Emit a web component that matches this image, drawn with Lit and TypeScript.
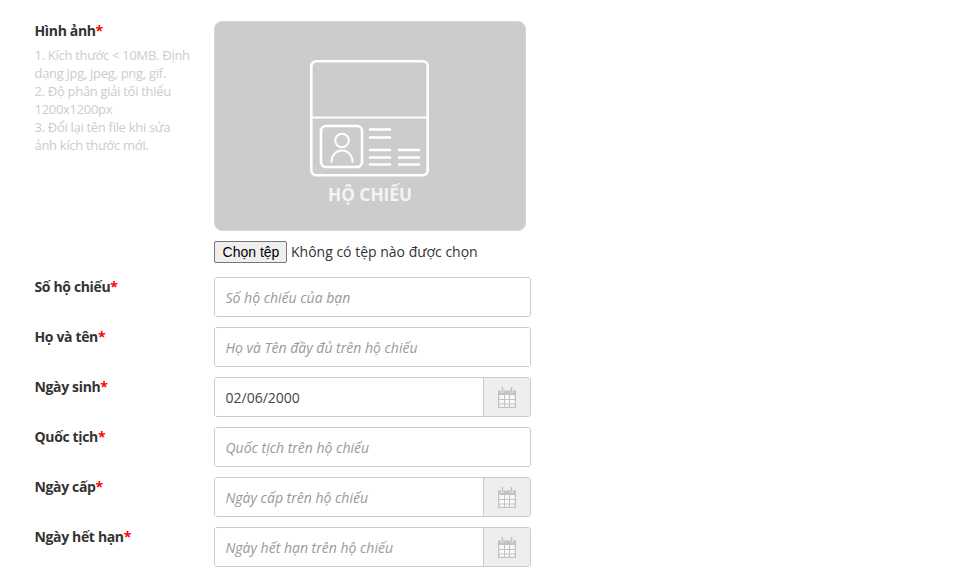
import { LitElement, html, css, svg } from "lit";
import { customElement } from "lit/decorators.js";

const calendar = html`<svg width="20" height="23" viewBox="0 0 20 23">
  <path fill="#c2c2c2" d="M1 4.500h3v2.500h2.500V4.500h7V7H16V4.500h3V22H1z"/>
  <rect x="4.700" y="1" width="1.500" height="5.500" fill="#c2c2c2"/>
  <rect x="13.800" y="1" width="1.500" height="5.500" fill="#c2c2c2"/>
  <g fill="#f9f9f9">
    <rect x="2.300" y="9" width="4.700" height="4"/><rect x="8" y="9" width="4" height="4"/><rect x="13" y="9" width="4.700" height="4"/>
    <rect x="2.300" y="14" width="4.700" height="3.500"/><rect x="8" y="14" width="4" height="3.500"/><rect x="13" y="14" width="4.700" height="3.500"/>
    <rect x="2.300" y="18.500" width="4.700" height="2.300"/><rect x="8" y="18.500" width="4" height="2.300"/><rect x="13" y="18.500" width="4.700" height="2.300"/>
  </g>
</svg>`;

const passportIcon = svg`
  <g fill="none" stroke="#fff" stroke-linecap="round">
    <rect x="1.300" y="1.300" width="116.400" height="114" rx="5" stroke-width="2.600"/>
    <path d="M1.500 57.500h116" stroke-width="1.800"/>
    <rect x="11" y="66" width="41" height="41" rx="5" stroke-width="2.600"/>
    <circle cx="32" cy="80.500" r="6.800" stroke-width="2"/>
    <path d="M21.500 102c0-7 4.600-11.500 10.500-11.500S42.500 95 42.500 102" stroke-width="2"/>
    <path d="M60 69.500h20M60 77.500h20M60 90h20M60 97.500h20M60 104.500h20M89 90h20M89 97.500h20M89 104.500h20" stroke-width="2.600"/>
  </g>`;

@customElement("app-root")
export class AppRoot extends LitElement {
  static styles = css`
    :host {
      display: block;
      box-sizing: border-box;
      height: 587px;
      padding: 21px 0 0 34.500px;
      background: #fff;
      font-family: "Open Sans", sans-serif;
      font-size: 14px;
      color: #333;
      overflow: hidden;
    }
    .row {
      display: grid;
      grid-template-columns: 179.500px 317px;
      margin-bottom: 10px;
    }
    .row.first {
      margin-bottom: 14px;
    }
    .label {
      font-weight: 700;
      letter-spacing: -0.35px;
      line-height: 20px;
      color: #333;
    }
    .req {
      color: #f00;
    }
    .help {
      margin-top: 5px;
      width: 157px;
      font-size: 13px;
      letter-spacing: -0.3px;
      line-height: 18px;
      color: #ccc;
    }
    .photo {
      box-sizing: border-box;
      width: 312px;
      height: 210px;
      background: #ccc;
      border-radius: 8px;
      border: 1px solid #d6d6d6;
      display: flex;
      flex-direction: column;
      align-items: center;
      padding-top: 37.500px;
    }
    .photo svg {
      display: block;
    }
    .photo-title {
      margin-top: 6.500px;
      font-size: 17.300px;
      line-height: 24px;
      font-weight: 700;
      color: #f4f4f4;
    }
    .file {
      display: flex;
      align-items: center;
      margin-top: 10px;
      height: 22px;
      color: #333;
      line-height: 20px;
    }
    .file span {
      margin-top: -1px;
    }
    .file button {
      box-sizing: border-box;
      width: 73px;
      height: 22px;
      margin: 0 4px 0 0;
      padding: 0 0 0 1px;
      border: 1px solid #767676;
      border-radius: 2px;
      background: #efefef;
      color: #000;
      font-family: "Liberation Sans", Arial, sans-serif;
      font-size: 14px;
    }
    .control {
      display: flex;
      box-sizing: border-box;
      height: 40px;
      border: 1px solid #ccc;
      border-radius: 3px;
      overflow: hidden;
    }
    .control input {
      flex: 1;
      min-width: 0;
      border: 0;
      outline: 0;
      padding: 0 10.500px;
      background: #fff;
      color: #444;
      font-family: "Open Sans", sans-serif;
      font-size: 14px;
    }
    .control input::placeholder {
      color: #999;
      font-style: italic;
      opacity: 1;
    }
    .addon {
      width: 46px;
      flex: none;
      border-left: 1px solid #ccc;
      background: #eee;
      display: flex;
      align-items: center;
      justify-content: center;
    }
  `;

  private field(label: string, placeholder: string, value = "", date = false) {
    return html`<div class="row">
      <div class="label">${label}<span class="req">*</span></div>
      <div class="control">
        <input type="text" .value=${value} placeholder=${placeholder} />
        ${date ? html`<span class="addon">${calendar}</span>` : ""}
      </div>
    </div>`;
  }

  render() {
    return html`
      <div class="row first">
        <div>
          <div class="label">Hình ảnh<span class="req">*</span></div>
          <div class="help">
            1. Kích thước &lt; 10MB. Định dạng jpg, jpeg, png, gif.<br />
            2. Độ phân giải tối thiểu 1200x1200px<br />
            3. Đổi lại tên file khi sửa ảnh kích thước mới.
          </div>
        </div>
        <div>
          <div class="photo">
            <svg width="120" height="117" viewBox="0 0 120 117">${passportIcon}</svg>
            <div class="photo-title">HỘ CHIẾU</div>
          </div>
          <div class="file">
            <button type="button">Chọn tệp</button>
            <span>Không có tệp nào được chọn</span>
          </div>
        </div>
      </div>
      ${this.field("Số hộ chiếu", "Số hộ chiếu của bạn")}
      ${this.field("Họ và tên", "Họ và Tên đầy đủ trên hộ chiếu")}
      ${this.field("Ngày sinh", "", "02/06/2000", true)}
      ${this.field("Quốc tịch", "Quốc tịch trên hộ chiếu")}
      ${this.field("Ngày cấp", "Ngày cấp trên hộ chiếu", "", true)}
      ${this.field("Ngày hết hạn", "Ngày hết hạn trên hộ chiếu", "", true)}
    `;
  }
}
